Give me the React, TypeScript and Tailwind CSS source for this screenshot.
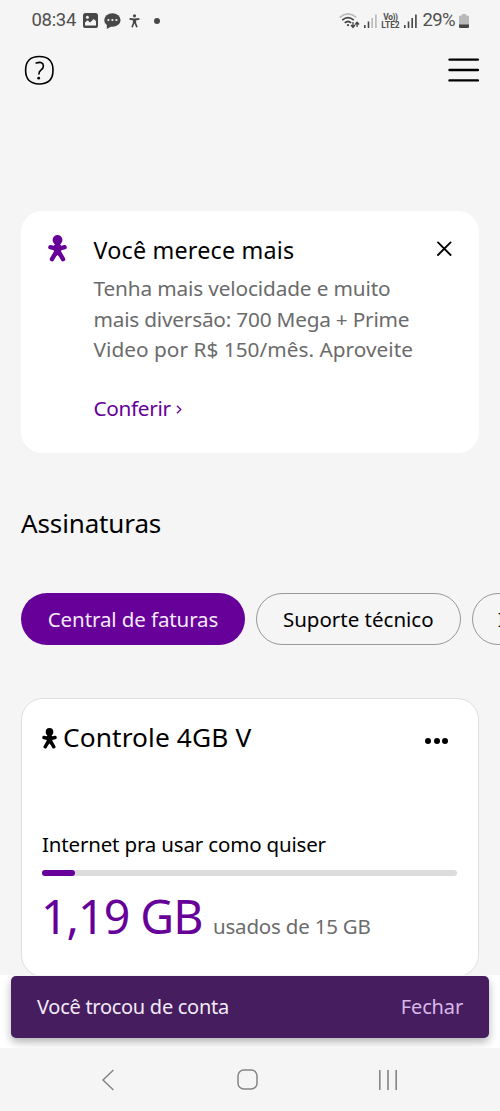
import { ReactNode } from "react";

interface PersonIconProps {
  className?: string;
}

function PersonIcon({ className }: PersonIconProps) {
  return (
    <svg viewBox="0 0 19 27" className={className} fill="currentColor">
      <circle cx="9.5" cy="5" r="4.9" />
      <path
        d="M2.4 12.2 L7 13.3 H12 L16.6 12.2 M7.8 17.5 L4 24.2 M11.2 17.5 L15 24.2"
        fill="none"
        stroke="currentColor"
        strokeWidth="4.4"
        strokeLinecap="round"
        strokeLinejoin="round"
      />
      <path d="M7 9 H12 L13.9 12 L12.8 17 L14 20 L11.6 21.8 L9.5 20 L7.4 21.8 L5 20 L6.2 17 L5.1 12 Z" />
    </svg>
  );
}

function SignalIcon({ active }: { active: number }) {
  return (
    <svg width="13" height="14" viewBox="0 0 13 14">
      {[0, 1, 2, 3].map((bar) => (
        <rect
          key={bar}
          x={bar * 3.7}
          y={11 - bar * 3.5}
          width="1.6"
          height={3 + bar * 3.5}
          fill={bar < active ? "#454545" : "#b9b9b9"}
        />
      ))}
    </svg>
  );
}

function StatusBar() {
  return (
    <div className="flex h-10 shrink-0 items-center pt-px pr-[31px] pl-[31.5px] font-['Roboto',sans-serif] text-[#505050]">
      <span className="w-[51.5px] text-[18.5px] tracking-[-0.3px]">08:34</span>
      <svg width="15" height="15" viewBox="0 0 15 15">
        <rect width="15" height="15" rx="2.6" fill="#484848" />
        <path
          d="M2 12.6 V9.5 L4.6 7.3 L7 9.6 L10.8 6 L13 8.3 V12.6 Z"
          fill="#f5f5f5"
        />
        <circle cx="4.4" cy="4.2" r="1.5" fill="#f5f5f5" />
      </svg>
      <svg width="17" height="16" viewBox="0 0 17 16" className="ml-[6px]">
        <ellipse cx="8.4" cy="7" rx="8.2" ry="6.8" fill="#484848" />
        <path d="M2.8 11 L2.8 16 L8 13 Z" fill="#484848" />
        <g fill="#f5f5f5">
          <circle cx="4.4" cy="7" r="1.1" />
          <circle cx="8.4" cy="7" r="1.1" />
          <circle cx="12.4" cy="7" r="1.1" />
        </g>
      </svg>
      <svg
        width="11"
        height="14"
        viewBox="0 0 11 14"
        className="ml-[8px]"
        fill="#484848"
      >
        <circle cx="5.5" cy="1.8" r="1.6" />
        <path
          d="M0.6 4.8 Q5.5 5.8 10.4 4.8 M5.5 5.5 V8 M4.7 5.5 V9 L3 13.3 M6.3 5.5 V9 L8 13.3"
          fill="none"
          stroke="#484848"
          strokeWidth="1.7"
        />
      </svg>
      <span className="ml-[14px] size-[6px] rounded-full bg-[#484848]" />
      <div className="ml-auto flex items-center">
        <svg width="21" height="16" viewBox="0 0 21 16" fill="none">
          <path
            d="M0.7 4.3 Q9 -2.6 17.4 4.3"
            stroke="#b9b9b9"
            strokeWidth="1.6"
          />
          <g stroke="#454545" strokeWidth="1.7">
            <path d="M3.2 7.2 Q9 2.2 14.8 7.2" />
            <path d="M5.7 9.8 Q9 7.2 12.2 9.8" />
          </g>
          <circle cx="9" cy="12.2" r="1.1" fill="#454545" />
          <path
            d="M14 9 V14.2 M12 12 L14 14.4 L16 12 M18.1 14 V9.5 M16.2 11.5 L18.1 9.3 L20.1 11.5"
            stroke="#454545"
            strokeWidth="1.3"
          />
        </svg>
        <div className="ml-[4px]">
          <SignalIcon active={2} />
        </div>
        <div className="ml-[4px] flex w-[19px] flex-col items-center text-[8.4px] leading-[8px] font-bold whitespace-nowrap">
          <span className="tracking-[-0.4px]">Vo))</span>
          <span>LTE2</span>
        </div>
        <div className="ml-[3.5px]">
          <SignalIcon active={4} />
        </div>
        <span className="ml-[6px] w-[36.5px] text-[18.5px] tracking-[-0.7px]">
          29%
        </span>
        <svg width="10" height="14" viewBox="0 0 10 14">
          <path
            d="M3 0 H7 V1.5 H8.5 Q10 1.5 10 3 V12.5 Q10 14 8.5 14 H1.5 Q0 14 0 12.5 V3 Q0 1.5 1.5 1.5 H3 Z"
            fill="#b9b9b9"
          />
          <path
            d="M0 10.5 H10 V12.5 Q10 14 8.5 14 H1.5 Q0 14 0 12.5 Z"
            fill="#454545"
          />
        </svg>
      </div>
    </div>
  );
}

function Header() {
  return (
    <header className="flex h-[60px] shrink-0 items-center justify-between pr-5 pl-6">
      <svg width="30" height="30" viewBox="0 0 30 30" fill="none">
        <path
          d="M15.3 1.5 C24.2 1.5 29 6.3 29 15.3 C29 24.3 24.2 29 15.3 29 C6.3 29 1.6 24.3 1.6 15.3 C1.6 6.3 6.3 1.5 15.3 1.5 Z"
          stroke="#000"
          strokeWidth="1.6"
        />
        <path
          d="M12.2 8 Q19.4 5.9 19.4 11 Q19.4 13.3 16.9 15.1 Q14.9 16.5 14.9 19"
          stroke="#000"
          strokeWidth="1.6"
          strokeLinecap="round"
        />
        <circle cx="14.7" cy="23.2" r="1.4" fill="#000" />
      </svg>
      <svg
        width="32"
        height="24"
        viewBox="0 0 32 24"
        stroke="#000"
        strokeWidth="2.4"
        strokeLinecap="round"
      >
        <path d="M1.5 1.6 H29.9 M1.5 12 H29.9 M1.5 22.4 H29.9" />
      </svg>
    </header>
  );
}

function OfferCard() {
  return (
    <section className="mx-[21px] mt-[111px] flex h-[241.5px] shrink-0 rounded-[21px] bg-white pl-[26.5px]">
      <PersonIcon className="mt-[23.5px] h-[27px] w-[19px] shrink-0 text-[#660099]" />
      <div className="ml-[27px] flex flex-1 flex-col whitespace-nowrap">
        <h2 className="mt-[24px] text-[23.3px] leading-[31px] tracking-[0.2px]">
          Você merece mais
        </h2>
        <div className="mt-[7px] text-[20.8px] leading-[30.7px] text-[#6b6b6b]">
          <p className="tracking-[-0.15px]">Tenha mais velocidade e muito</p>
          <p className="tracking-[-0.22px]">mais diversão: 700 Mega + Prime</p>
          <p className="tracking-[0.02px]">Video por R$ 150/mês. Aproveite</p>
        </div>
        <a className="mt-[28px] flex items-center text-[20.8px] leading-[30px] tracking-[-0.35px] text-[#660099]">
          Conferir
          <svg
            width="6"
            height="9"
            viewBox="0 0 6 9"
            className="mt-[3px] ml-[5px]"
            fill="none"
            stroke="currentColor"
            strokeWidth="1.3"
          >
            <path d="M1 0.7 L4.8 4.5 L1 8.3" />
          </svg>
        </a>
      </div>
      <svg
        width="16"
        height="16"
        viewBox="0 0 16 16"
        className="mt-[30px] mr-[27px]"
        stroke="#000"
        strokeWidth="1.8"
        strokeLinecap="round"
      >
        <path d="M2 1.4 L14.6 14 M14.6 1.4 L2 14" />
      </svg>
    </section>
  );
}

interface ChipProps {
  children: ReactNode;
  className: string;
}

function Chip({ children, className }: ChipProps) {
  return (
    <button
      className={`flex h-[52px] shrink-0 items-center rounded-full text-[20.5px] whitespace-nowrap ${className}`}
    >
      {children}
    </button>
  );
}

function PlanCard() {
  return (
    <section className="mx-[21px] mt-[52.5px] h-[279px] shrink-0 rounded-[22px] border border-[#dfdfdf] bg-white pr-[21px] pl-[20px] whitespace-nowrap">
      <div className="mt-[21px] flex h-[37px] items-center">
        <PersonIcon className="h-[21px] w-[15px]" />
        <h3 className="ml-[6px] text-[26.3px] tracking-[0.1px]">
          Controle 4GB V
        </h3>
        <div className="mt-[5px] mr-[9px] ml-auto flex gap-[2.5px]">
          <span className="size-[6px] rounded-full bg-black" />
          <span className="size-[6px] rounded-full bg-black" />
          <span className="size-[6px] rounded-full bg-black" />
        </div>
      </div>
      <p className="mt-[72px] text-[20.5px] leading-[30px] tracking-[-0.17px]">
        Internet pra usar como quiser
      </p>
      <div className="mt-[11px] h-[6px] rounded-full bg-[#dcdcdc]">
        <div className="h-full w-[33px] rounded-full bg-[#660099]" />
      </div>
      <div className="mt-[9px] flex items-baseline leading-[62px]">
        <span className="-ml-px w-[172px] text-[46.5px] tracking-[-1px] text-[#660099]">
          1,19 GB
        </span>
        <span className="text-[20.5px] tracking-[-0.2px] text-[#6b6b6b]">
          usados de 15 GB
        </span>
      </div>
    </section>
  );
}

function Snackbar() {
  return (
    <div className="h-[73px] shrink-0 overflow-hidden bg-white pt-[0.5px] pr-[11px] pl-[10.5px]">
      <div className="flex h-[62.5px] items-center justify-between rounded-[5px] bg-[#461e5f] pr-[26px] pl-[26.5px] text-[20px] shadow-[0_4px_9px_rgba(0,0,0,0.3)]">
        <span className="tracking-[-0.28px] text-[#f3eaf7]">
          Você trocou de conta
        </span>
        <span className="tracking-[-0.15px] text-[#d8b8e8]">Fechar</span>
      </div>
    </div>
  );
}

function NavigationBar() {
  return (
    <nav className="flex h-[63px] shrink-0 items-center bg-[#f5f5f5] pl-[101px] text-[#858585]">
      <svg
        width="14"
        height="22"
        viewBox="0 0 14 22"
        fill="none"
        stroke="currentColor"
        strokeWidth="1.5"
      >
        <path d="M12.4 1 L2 11 L12.4 21" />
      </svg>
      <svg
        width="21"
        height="21"
        viewBox="0 0 21 21"
        className="ml-[122px]"
        fill="none"
        stroke="currentColor"
        strokeWidth="1.5"
      >
        <rect x="1" y="1" width="19" height="19" rx="5.8" />
      </svg>
      <svg
        width="20"
        height="20"
        viewBox="0 0 20 20"
        className="ml-[120px]"
        stroke="currentColor"
        strokeWidth="1.6"
      >
        <path d="M1.8 0 V20 M10 0 V20 M18.2 0 V20" />
      </svg>
    </nav>
  );
}

export default function App() {
  return (
    <div className="flex h-[1111px] w-[500px] flex-col overflow-hidden bg-[#f5f5f5] font-['Noto_Sans',sans-serif] text-black">
      <main className="flex h-[975px] shrink-0 flex-col overflow-hidden">
        <StatusBar />
        <Header />
        <OfferCard />
        <h1 className="mt-[50px] ml-[21px] text-[26px] leading-[40px] tracking-[-0.13px]">
          Assinaturas
        </h1>
        <div className="mt-[50.5px] ml-[21px] flex shrink-0 gap-[10.5px]">
          <Chip className="w-[224px] justify-center bg-[#660099] tracking-[-0.1px] text-[#f5eafa]">
            Central de faturas
          </Chip>
          <Chip className="w-[205.5px] justify-center border border-[#999]">
            Suporte técnico
          </Chip>
          <Chip className="w-[150px] border border-[#999] pl-[25.3px]">
            Internet
          </Chip>
        </div>
        <PlanCard />
      </main>
      <Snackbar />
      <NavigationBar />
    </div>
  );
}
